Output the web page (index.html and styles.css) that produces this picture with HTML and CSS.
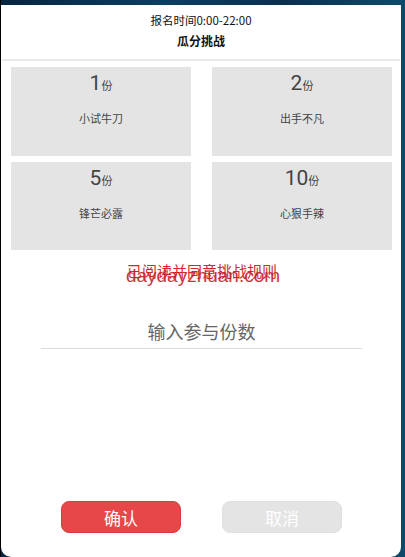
FILE: index.html
```html
<!DOCTYPE html>
<html lang="zh">
<head>
<meta charset="utf-8">
<link rel="stylesheet" href="styles.css">
</head>
<body>
<div class="panel">
  <div class="header">
    <div class="time">报名时间0:00-22:00</div>
    <div class="title">瓜分挑战</div>
  </div>
  <div class="sep"></div>
  <div class="cards">
    <div class="card"><div class="num">1<span class="unit">份</span></div><div class="label">小试牛刀</div></div>
    <div class="card"><div class="num">2<span class="unit">份</span></div><div class="label">出手不凡</div></div>
    <div class="card"><div class="num">5<span class="unit">份</span></div><div class="label">锋芒必露</div></div>
    <div class="card"><div class="num">10<span class="unit">份</span></div><div class="label">心狠手辣</div></div>
  </div>
  <div class="rules">
    <span class="rules-text">已阅读并同意挑战规则</span>
    <span class="mark">daydayzhuan.com</span>
  </div>
  <div class="input">输入参与份数</div>
  <div class="spacer"></div>
  <div class="buttons">
    <div class="btn ok">确认</div>
    <div class="btn cancel">取消</div>
  </div>
</div>
</body>
</html>
```
FILE: styles.css
```css
html, body {
  margin: 0;
  padding: 0;
  height: 100%;
}
body {
  background: linear-gradient(90deg, #06243f 0%, #0b3e63 40%, #0a2f4f 70%, #0e4a6a 100%);
  font-family: "Noto Sans CJK SC", "Roboto", sans-serif;
  display: flex;
  flex-direction: column;
  overflow: hidden;
  border-left: 1px solid #000;
  box-sizing: border-box;
}
.panel {
  margin: 5px 4px 0 0;
  background: #fff;
  flex: 1;
  display: flex;
  flex-direction: column;
  border-radius: 0 0 10px 10px;
}
.header {
  display: flex;
  flex-direction: column;
  align-items: center;
  padding-top: 6px;
  height: 48px;
  box-sizing: border-box;
}
.time {
  font-size: 11.5px;
  line-height: 18px;
  color: #111;
}
.title {
  font-size: 12px;
  line-height: 18px;
  margin-top: 3px;
  font-weight: bold;
  color: #111;
}
.sep {
  height: 2px;
  background: #ebebeb;
  margin: 6px 1px 0 1px;
}
.cards {
  display: grid;
  grid-template-columns: 180px 180px;
  column-gap: 21px;
  row-gap: 6px;
  padding: 6px 0 0 10px;
}
.card {
  background: #e4e4e4;
  height: 89px;
  display: flex;
  flex-direction: column;
  align-items: center;
}
.card:nth-child(n+3) { height: 88px; }
.num {
  font-family: "Roboto", sans-serif;
  font-size: 21px;
  line-height: 24px;
  margin-top: 4px;
  color: #444;
}
.unit {
  font-family: "Noto Sans CJK SC", sans-serif;
  font-size: 11px;
  color: #444;
}
.label {
  font-size: 11px;
  line-height: 14px;
  margin-top: 14px;
  color: #444;
}
.rules {
  position: relative;
  text-align: center;
  margin-top: 8px;
  height: 24px;
}
.rules-text {
  font-size: 15px;
  line-height: 20px;
  color: #d3272f;
  margin-left: 2px;
}
.mark {
  position: absolute;
  left: 0;
  right: 0;
  top: 6px;
  text-align: center;
  font-family: "Liberation Sans", Arial, sans-serif;
  font-size: 19px;
  line-height: 24px;
  color: #c61f2a;
  opacity: 0.9;
  padding-left: 4px;
}
.input {
  margin: 36px 39px 0 40px;
  text-align: center;
  font-size: 18px;
  line-height: 26px;
  color: #666;
  padding-bottom: 4px;
  border-bottom: 1px solid #dcdcdc;
}
.spacer { flex: 1; }
.buttons {
  display: flex;
  justify-content: center;
  gap: 41px;
  padding-bottom: 24px;
  padding-left: 1px;
}
.btn {
  width: 120px;
  height: 32px;
  border-radius: 8px;
  display: flex;
  align-items: center;
  justify-content: center;
  color: #fff;
  font-size: 17px;
  box-sizing: border-box;
}
.ok {
  background: #e8474a;
  border: 1px solid #dc3a3d;
}
.cancel {
  background: #e4e4e4;
  border: 1px solid #e0e0e0;
}
```
